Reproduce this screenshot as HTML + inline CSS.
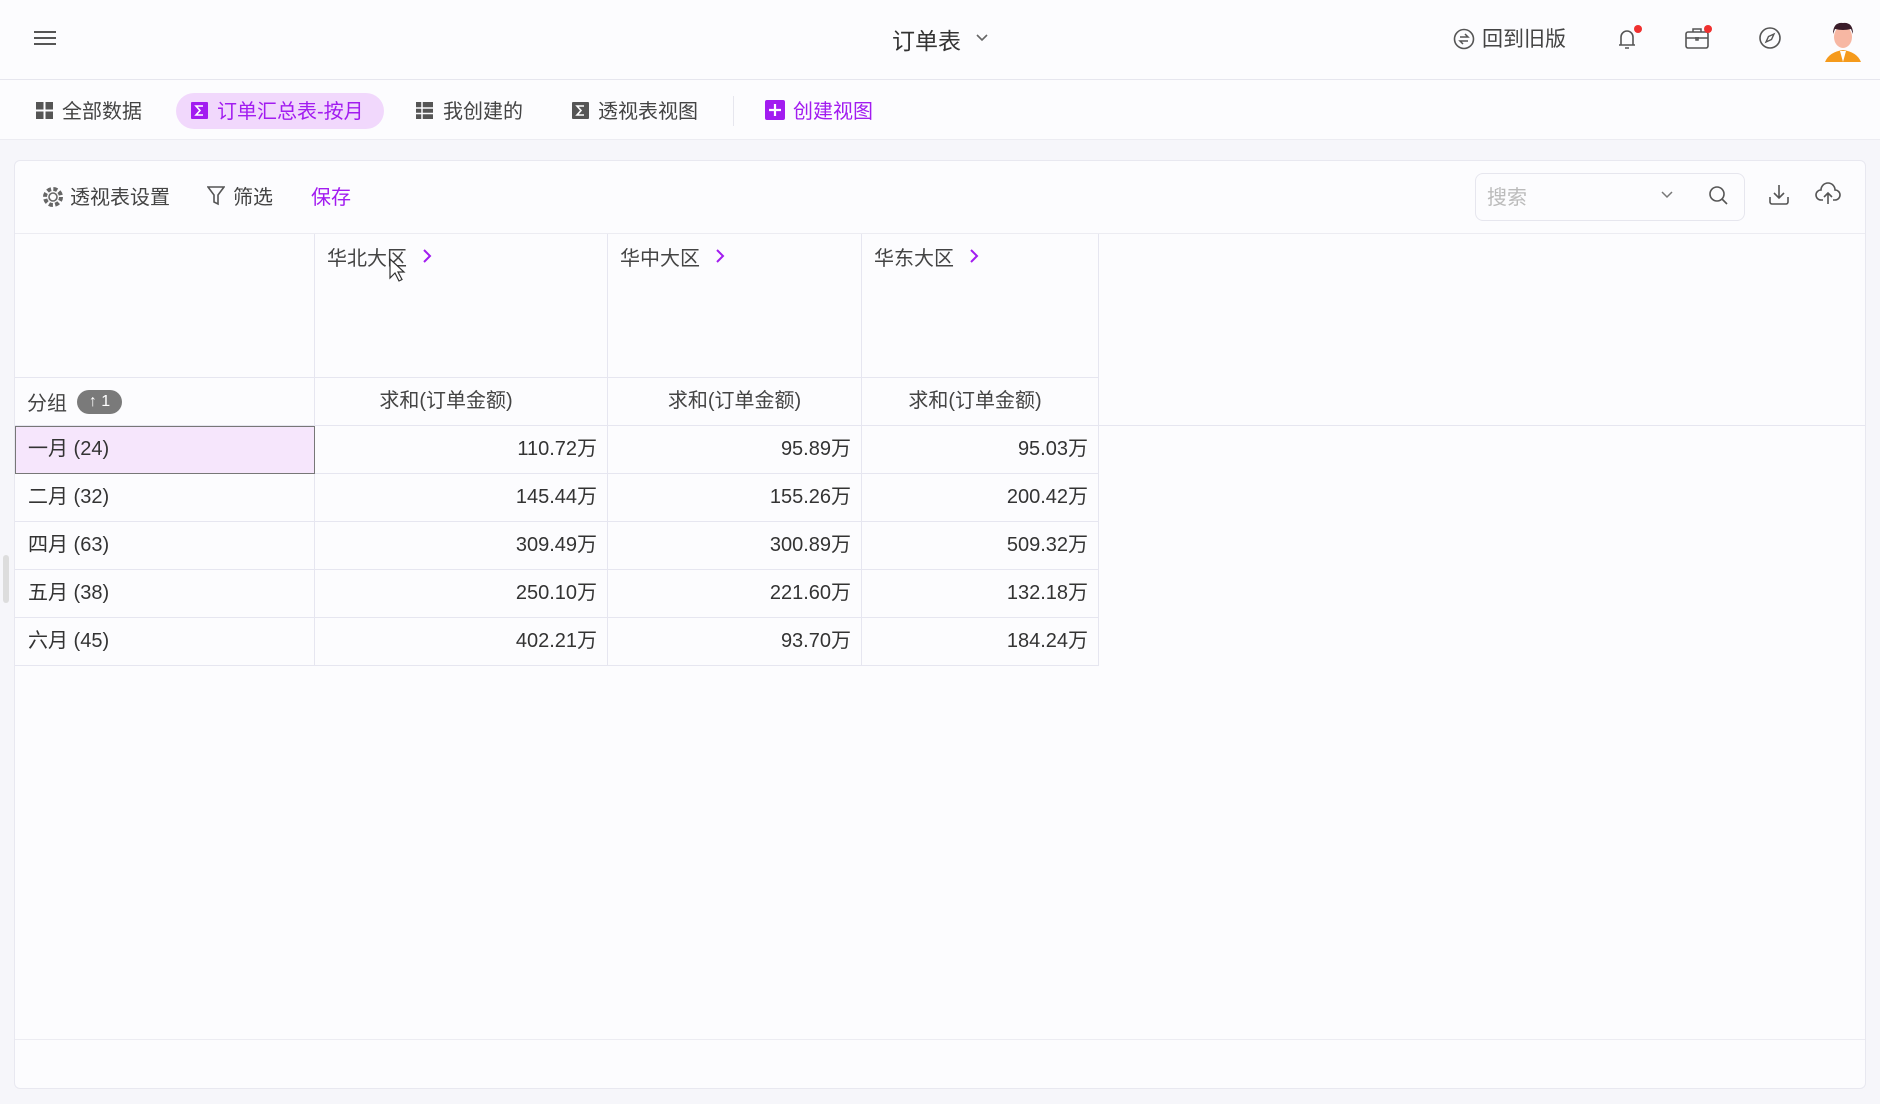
<!DOCTYPE html>
<html><head><meta charset="utf-8">
<style>
*{box-sizing:border-box;margin:0;padding:0}
body{width:1880px;height:1104px;background:#f6f6fa;font-family:"Liberation Sans","Noto Sans CJK SC",sans-serif;color:#333;position:relative;overflow:hidden;font-size:20px}
.top{position:absolute;left:0;top:0;width:1880px;height:80px;background:#fcfcfe;border-bottom:1px solid #e6e6ee}
.tabs{position:absolute;left:0;top:80px;width:1880px;height:60px;background:#fcfcfe;border-bottom:1px solid #ececf2}
.abs{position:absolute;white-space:nowrap}
.card{position:absolute;left:14px;top:160px;width:1852px;height:929px;background:#fcfcfe;border:1px solid #e8e8f0;border-radius:6px}
.purple{color:#a21cf0}
.cell{position:absolute;border-right:1px solid #e6e6f0;border-bottom:1px solid #e6e6f0}
.num{text-align:right;padding-right:10px;line-height:46px;font-size:20px;color:#333}
.lab{line-height:46px;padding-left:13px}
</style></head><body>
<div class="top">
  <svg class="abs" style="left:34px;top:30px" width="22" height="16"><path d="M0 2H22M0 8H22M0 14H22" stroke="#555" stroke-width="2"/></svg>
  <div class="abs" style="left:892px;top:22px;font-size:23px;color:#333">订单表</div>
  <svg class="abs" style="left:975px;top:33px" width="14" height="10"><path d="M2 2L7 7L12 2" stroke="#666" stroke-width="1.6" fill="none"/></svg>
  <svg class="abs" style="left:1453px;top:28px" width="22" height="22"><circle cx="11" cy="11" r="9.5" stroke="#555" stroke-width="1.6" fill="none"/><path d="M7 9H15L12 6M15 13H7L10 16" stroke="#555" stroke-width="1.5" fill="none"/></svg>
  <div class="abs" style="left:1482px;top:23px;font-size:21px;color:#444">回到旧版</div>
  <svg class="abs" style="left:1614px;top:24px" width="30" height="28"><path d="M5 21H21M7 21V13A6 6 0 0 1 19 13V21M11 24H15" stroke="#555" stroke-width="1.6" fill="none"/><circle cx="24" cy="5" r="4" fill="#f0302f"/></svg>
  <svg class="abs" style="left:1684px;top:24px" width="32" height="28"><rect x="2" y="8" width="22" height="16" rx="2" stroke="#555" stroke-width="1.6" fill="none"/><path d="M9 8V5H17V8M2 14H24M12 13V16H14V13" stroke="#555" stroke-width="1.5" fill="none"/><circle cx="24" cy="5" r="4" fill="#f0302f"/></svg>
  <svg class="abs" style="left:1758px;top:26px" width="24" height="24"><circle cx="12" cy="12" r="10" stroke="#555" stroke-width="1.6" fill="none"/><path d="M16 8L13.5 13.5L8 16L10.5 10.5Z" stroke="#555" stroke-width="1.4" fill="none"/></svg>
  <svg class="abs" style="left:1823px;top:19px" width="40" height="44"><path d="M2 43Q6 33 20 31Q34 33 38 43Z" fill="#f59a1c"/><path d="M17 32L20 43L23 32Z" fill="#fff"/><ellipse cx="20" cy="18" rx="9" ry="11" fill="#f7b7a3"/><path d="M10 15Q10 3 20 4Q30 3 30 15L28 10Q20 12 12 10Z" fill="#3a1d2a"/></svg>
</div>
<div class="tabs">
  <svg class="abs" style="left:36px;top:22px" width="17" height="17"><rect x="0" y="0" width="7.5" height="7.5" fill="#555"/><rect x="9.5" y="0" width="7.5" height="7.5" fill="#555"/><rect x="0" y="9.5" width="7.5" height="7.5" fill="#555"/><rect x="9.5" y="9.5" width="7.5" height="7.5" fill="#555"/></svg>
  <div class="abs" style="left:62px;top:15px;color:#444">全部数据</div>
  <div class="abs" style="left:176px;top:13px;width:208px;height:36px;border-radius:18px;background:#f1d8fc"></div>
  <svg class="abs" style="left:191px;top:22px" width="17" height="17"><rect width="17" height="17" rx="1" fill="#a21cf0"/><path d="M12 4H5L9 8.5L5 13H12" stroke="#fff" stroke-width="1.6" fill="none"/></svg>
  <div class="abs purple" style="left:217px;top:15px">订单汇总表-按月</div>
  <svg class="abs" style="left:416px;top:22px" width="17" height="17"><rect width="17" height="17" fill="#555"/><path d="M0 6H17M0 11.5H17M6 0V17" stroke="#fcfcfe" stroke-width="1.5"/></svg>
  <div class="abs" style="left:443px;top:15px;color:#444">我创建的</div>
  <svg class="abs" style="left:572px;top:22px" width="17" height="17"><rect width="17" height="17" rx="1" fill="#555"/><path d="M12 4H5L9 8.5L5 13H12" stroke="#fff" stroke-width="1.6" fill="none"/></svg>
  <div class="abs" style="left:598px;top:15px;color:#444">透视表视图</div>
  <div class="abs" style="left:733px;top:16px;width:1px;height:30px;background:#e6e6ee"></div>
  <svg class="abs" style="left:765px;top:20px" width="20" height="20"><rect width="20" height="20" rx="2" fill="#a21cf0"/><path d="M10 4V16M4 10H16" stroke="#fff" stroke-width="2.2"/></svg>
  <div class="abs purple" style="left:793px;top:15px">创建视图</div>
</div>
<div class="card">
  <svg class="abs" style="left:27px;top:25px" width="22" height="22"><circle cx="11" cy="11" r="8" fill="none" stroke="#666" stroke-width="4" stroke-dasharray="4 2.3"/><circle cx="11" cy="11" r="4" fill="none" stroke="#666" stroke-width="1.6"/></svg>
  <div class="abs" style="left:55px;top:20px;color:#444">透视表设置</div>
  <svg class="abs" style="left:192px;top:25px" width="18" height="20"><path d="M1 1H17L11 9V18L7 16V9Z" stroke="#555" stroke-width="1.6" fill="none"/></svg>
  <div class="abs" style="left:218px;top:20px;color:#444">筛选</div>
  <div class="abs purple" style="left:296px;top:20px">保存</div>
  <div class="abs" style="left:1460px;top:12px;width:270px;height:48px;border:1px solid #e6e6ee;border-radius:8px"></div>
  <div class="abs" style="left:1472px;top:20px;color:#bbb">搜索</div>
  <svg class="abs" style="left:1645px;top:29px" width="14" height="10"><path d="M2 2L7 7L12 2" stroke="#777" stroke-width="1.5" fill="none"/></svg>
  <svg class="abs" style="left:1693px;top:24px" width="22" height="22"><circle cx="9" cy="9" r="7" stroke="#555" stroke-width="1.6" fill="none"/><path d="M14 14L19 19" stroke="#555" stroke-width="1.6"/></svg>
  <svg class="abs" style="left:1752px;top:22px" width="24" height="24"><path d="M12 2V15M7 10L12 15L17 10M3 14V19A2 2 0 0 0 5 21H19A2 2 0 0 0 21 19V14" stroke="#555" stroke-width="1.6" fill="none"/></svg>
  <svg class="abs" style="left:1800px;top:21px" width="26" height="24"><path d="M8 18H6A5 5 0 0 1 6 8A7 7 0 0 1 20 8A5 5 0 0 1 20 18H18M13 22V11M9 15L13 11L17 15" stroke="#555" stroke-width="1.6" fill="none"/></svg>
  <div class="abs" style="left:0;top:72px;width:1850px;height:1px;background:#ececf2"></div>
  <div style="position:absolute;left:0;top:73px">
    <div class="cell" style="left:0;top:0;width:300px;height:144px"></div>
    <div class="cell" style="left:300px;top:0;width:293px;height:144px"><span class="abs" style="left:12px;top:8px;color:#444">华北大区</span><svg class="abs" style="left:107px;top:14px" width="10" height="16"><path d="M2 2L8 8L2 14" stroke="#a21cf0" stroke-width="2" fill="none"/></svg><svg class="abs" style="left:74px;top:24px" width="18" height="26"><path d="M1 1V20L6 15L10 23L13 21.5L9 14H15Z" fill="#fff" stroke="#333" stroke-width="1.2"/></svg></div>
    <div class="cell" style="left:593px;top:0;width:254px;height:144px"><span class="abs" style="left:12px;top:8px;color:#444">华中大区</span><svg class="abs" style="left:107px;top:14px" width="10" height="16"><path d="M2 2L8 8L2 14" stroke="#a21cf0" stroke-width="2" fill="none"/></svg></div>
    <div class="cell" style="left:847px;top:0;width:237px;height:144px"><span class="abs" style="left:12px;top:8px;color:#444">华东大区</span><svg class="abs" style="left:107px;top:14px" width="10" height="16"><path d="M2 2L8 8L2 14" stroke="#a21cf0" stroke-width="2" fill="none"/></svg></div>
    <div class="cell" style="left:0;top:144px;width:300px;height:48px"><span class="abs" style="left:12px;top:9px;color:#444">分组</span><span class="abs" style="left:62px;top:12px;width:45px;height:24px;border-radius:12px;background:#7a7a7a;color:#fff;font-size:16px;line-height:24px;text-align:center">↑ 1</span></div>
    <div class="cell" style="left:300px;top:144px;width:293px;height:48px;text-align:center;line-height:46px;color:#444;padding-right:30px">求和(订单金额)</div>
    <div class="cell" style="left:593px;top:144px;width:254px;height:48px;text-align:center;line-height:46px;color:#444">求和(订单金额)</div>
    <div class="cell" style="left:847px;top:144px;width:237px;height:48px;text-align:center;line-height:46px;color:#444;padding-right:10px">求和(订单金额)</div>
    <div class="abs" style="left:1084px;top:191px;width:766px;height:1px;background:#e6e6f0"></div>
  </div>
  <div style="position:absolute;left:0;top:265px">
    <div class="cell" style="left:0;top:0;width:300px;height:48px;background:#f6e6fc;border:1px solid #777;line-height:44px;padding-left:12px">一月 (24)</div>
    <div class="cell num" style="left:300px;top:0;width:293px;height:48px">110.72万</div>
    <div class="cell num" style="left:593px;top:0;width:254px;height:48px">95.89万</div>
    <div class="cell num" style="left:847px;top:0;width:237px;height:48px">95.03万</div>
    <div class="cell lab" style="left:0;top:48px;width:300px;height:48px">二月 (32)</div>
    <div class="cell num" style="left:300px;top:48px;width:293px;height:48px">145.44万</div>
    <div class="cell num" style="left:593px;top:48px;width:254px;height:48px">155.26万</div>
    <div class="cell num" style="left:847px;top:48px;width:237px;height:48px">200.42万</div>
    <div class="cell lab" style="left:0;top:96px;width:300px;height:48px">四月 (63)</div>
    <div class="cell num" style="left:300px;top:96px;width:293px;height:48px">309.49万</div>
    <div class="cell num" style="left:593px;top:96px;width:254px;height:48px">300.89万</div>
    <div class="cell num" style="left:847px;top:96px;width:237px;height:48px">509.32万</div>
    <div class="cell lab" style="left:0;top:144px;width:300px;height:48px">五月 (38)</div>
    <div class="cell num" style="left:300px;top:144px;width:293px;height:48px">250.10万</div>
    <div class="cell num" style="left:593px;top:144px;width:254px;height:48px">221.60万</div>
    <div class="cell num" style="left:847px;top:144px;width:237px;height:48px">132.18万</div>
    <div class="cell lab" style="left:0;top:192px;width:300px;height:48px">六月 (45)</div>
    <div class="cell num" style="left:300px;top:192px;width:293px;height:48px">402.21万</div>
    <div class="cell num" style="left:593px;top:192px;width:254px;height:48px">93.70万</div>
    <div class="cell num" style="left:847px;top:192px;width:237px;height:48px">184.24万</div>
  </div>
  <div class="abs" style="left:0;top:878px;width:1850px;height:1px;background:#ececf2"></div>
</div>
<div class="abs" style="left:3px;top:555px;width:6px;height:48px;border-radius:3px;background:#ddd"></div>
</body></html>
